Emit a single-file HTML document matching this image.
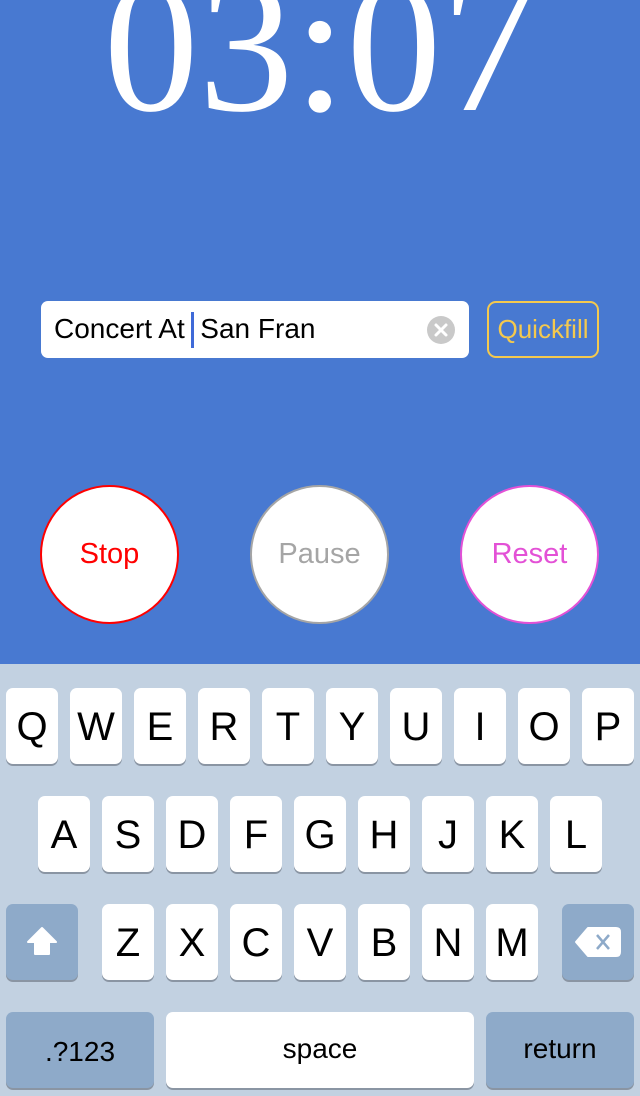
<!DOCTYPE html>
<html><head><meta charset="utf-8"><style>
*{margin:0;padding:0;box-sizing:border-box}
body{width:640px;height:1096px;overflow:hidden;background:#4879d1;position:relative;font-family:"Liberation Sans",sans-serif}
.t{position:absolute;left:0;width:640px;text-align:center;top:-46px;font-family:"Liberation Serif",serif;font-size:190px;color:#fff;line-height:186px}
.field{position:absolute;left:41px;top:301px;width:428px;height:57px;background:#fff;border-radius:7px}
.field span{position:absolute;left:13px;top:12px;font-size:28px;color:#000;white-space:pre}
.cur{position:absolute;left:150px;top:11px;width:3px;height:36px;background:#3f6ad8}
.clr{position:absolute;left:386px;top:15px;width:28px;height:28px;border-radius:50%;background:#c9c9c9}
.qf{position:absolute;left:487px;top:301px;width:112px;height:57px;border:2px solid #f4c94e;border-radius:9px;color:#f4c94e;font-size:26px;text-align:center;line-height:53px}
.c{position:absolute;top:485px;width:139px;height:139px;border-radius:50%;background:#fff;text-align:center;line-height:135px;font-size:29px}
.kb{position:absolute;left:0;top:664px;width:640px;height:432px;background:#c2d1e1}
.k{position:absolute;width:52px;height:76px;background:#fff;border-radius:7px;box-shadow:0 2px 0 #8a95a3;text-align:center;line-height:78px;font-size:40px;color:#000}
.g{background:#8eaac9}
</style></head><body>
<div class="t">03:07</div>
<div class="field"><span>Concert At  San Fran</span><div class="cur"></div>
<div class="clr"><svg width="28" height="28"><path d="M9 9L19 19M19 9L9 19" stroke="#fff" stroke-width="3" stroke-linecap="round"/></svg></div></div>
<div class="qf">Quickfill</div>
<div class="c" style="left:40px;border:2px solid #f00;color:#f00">Stop</div>
<div class="c" style="left:250px;border:2px solid #a5a5a5;color:#a5a5a5">Pause</div>
<div class="c" style="left:460px;border:2px solid #e351d6;color:#e351d6">Reset</div>
<div class="kb"></div>
<div id="keys"></div>
<div class="k g" style="left:6px;top:904px;width:72px"><svg width="40" height="40" style="margin-top:18px"><path d="M20 6L34 20H27V32H13V20H6Z" fill="#fff" stroke="#fff" stroke-width="2" stroke-linejoin="round"/></svg></div>
<div class="k g" style="left:562px;top:904px;width:72px"><svg width="48" height="36" style="margin-top:20px"><path d="M14 4H42Q46 4 46 8V28Q46 32 42 32H14L2 18Z" fill="#fff" stroke="#fff" stroke-linejoin="round" stroke-width="2"/><path d="M23 11L35 25M35 11L23 25" stroke="#8eaac9" stroke-width="2.5"/></svg></div>
<div class="k g" style="left:6px;top:1012px;width:148px;font-size:28px;line-height:80px">.?123</div>
<div class="k" style="left:166px;top:1012px;width:308px;font-size:28px;line-height:74px">space</div>
<div class="k g" style="left:486px;top:1012px;width:148px;font-size:28px;line-height:74px">return</div>
<script>
var rows=[["QWERTYUIOP",6,688],["ASDFGHJKL",38,796],["ZXCVBNM",102,904]],h="";
rows.forEach(function(r){for(var i=0;i<r[0].length;i++)h+='<div class="k" style="left:'+(r[1]+i*64)+'px;top:'+r[2]+'px">'+r[0][i]+'</div>';});
document.getElementById("keys").innerHTML=h;
</script>
</body></html>
